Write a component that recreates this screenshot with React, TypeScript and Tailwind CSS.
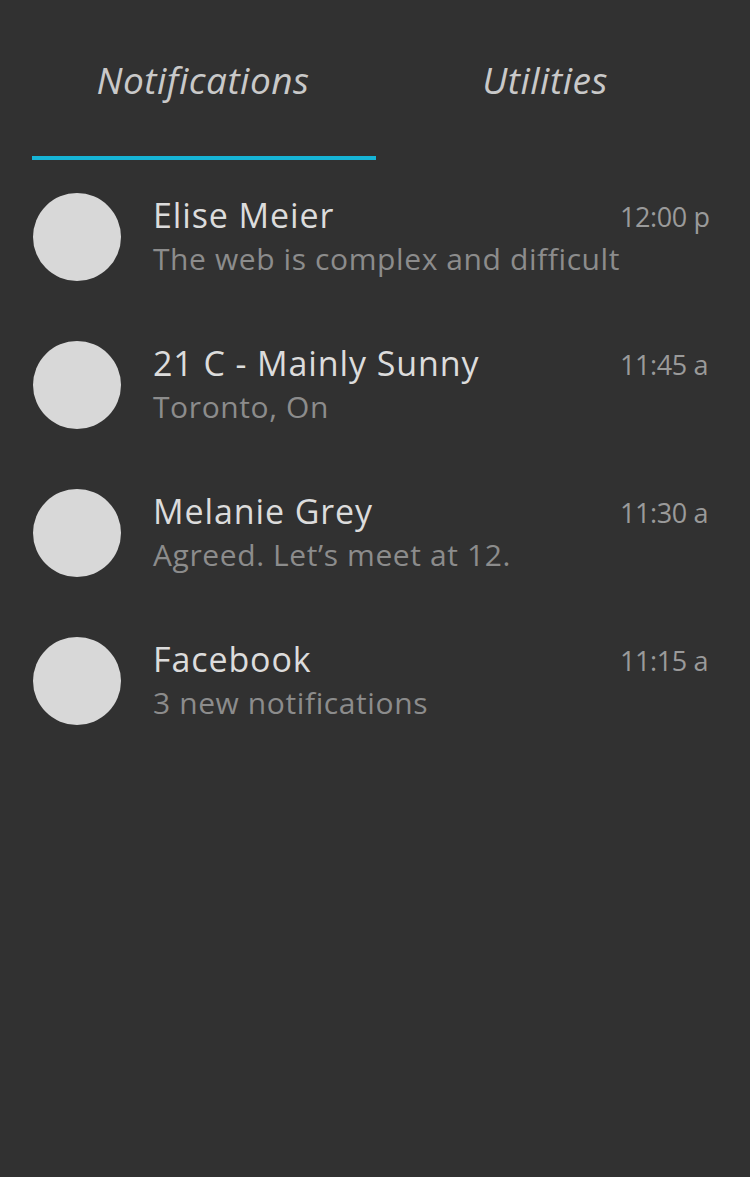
import * as React from 'react';

// Notifications panel: tab bar + list of notification rows

type Item = {
  title: string;
  body: string;
  time: string;
};

const items: Item[] = [
  { title: 'Elise Meier', body: 'The web is complex and difficult', time: '12:00 p' },
  { title: '21 C - Mainly Sunny', body: 'Toronto, On', time: '11:45 a' },
  { title: 'Melanie Grey', body: 'Agreed. Let\u2019s meet at 12.', time: '11:30 a' },
  { title: 'Facebook', body: '3 new notifications', time: '11:15 a' },
];

const Row = ({ item }: { item: Item }) => (
  <div className="flex h-[88px] items-start">
    <div className="h-[88px] w-[88px] shrink-0 rounded-full bg-[#d8d8d8]" />
    <div className="ml-[32px] flex min-w-0 flex-1 flex-col pt-[2px]">
      <div className="flex items-start">
        <div className="min-w-0 flex-1 whitespace-nowrap text-[34px] leading-[40px] tracking-[0.9px] text-[#dcdcdc]">
          {item.title}
        </div>
        <div className="mt-[4px] w-[93px] shrink-0 whitespace-nowrap text-[27px] leading-[36px] tracking-[-0.4px] text-[#9a9a9a]">
          {item.time}
        </div>
      </div>
      <div className="mt-[6px] whitespace-nowrap text-[30px] leading-[36px] tracking-[0.6px] text-[#8c8c8c]">
        {item.body}
      </div>
    </div>
  </div>
);

export default function App() {
  return (
    <div
      className="h-[1177px] w-[750px] overflow-hidden bg-[#313131]"
      style={{ fontFamily: '"Open Sans", "Noto Sans", sans-serif' }}
    >
      <div className="flex px-[31px] pt-[58px]">
        <div className="flex flex-1 flex-col items-center">
          <div className="text-[37px] italic leading-[44px] tracking-[0.5px] text-[#c9c9c9]">
            Notifications
          </div>
          <div className="mt-[54px] ml-[2px] h-[4px] w-full bg-[#16b4d6]" />
        </div>
        <div className="flex flex-1 flex-col items-center">
          <div className="mr-[4px] text-[37px] italic leading-[44px] tracking-[0.5px] text-[#c9c9c9]">
            Utilities
          </div>
        </div>
      </div>
      <div className="flex flex-col gap-[60px] pl-[33px] pr-[37px] pt-[33px]">
        {items.map((item) => (
          <Row key={item.title} item={item} />
        ))}
      </div>
    </div>
  );
}
